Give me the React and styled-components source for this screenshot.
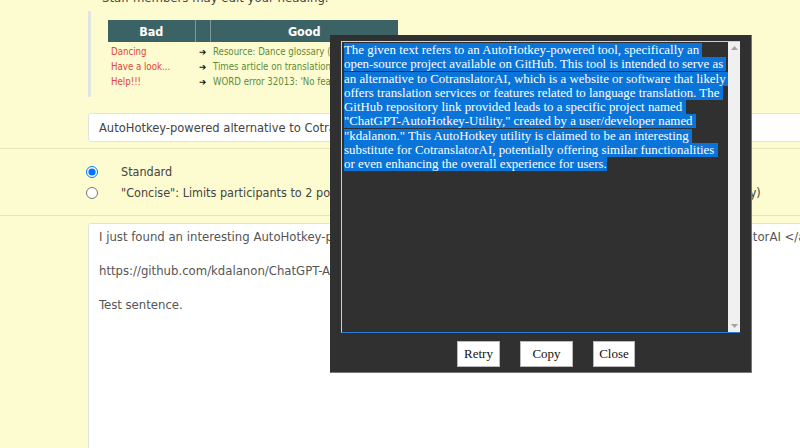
import React from 'react';
import styled, { createGlobalStyle } from 'styled-components';

const GlobalStyle = createGlobalStyle`
  html, body {
    margin: 0;
    padding: 0;
    background: #fdfbd0;
    overflow: hidden;
  }
  body {
    font-family: "DejaVu Sans Condensed", "Liberation Sans", sans-serif;
  }
`;

const Page = styled.div`
  position: relative;
  width: 800px;
  height: 448px;
  overflow: hidden;
  background: #fdfbd0;
`;

const Section = styled.div`
  padding-left: 88px;
`;

const Heading = styled.p`
  margin: -10px 0 0 14px;
  font-size: 13px;
  line-height: 16px;
  color: #444;
`;

const Quote = styled.div`
  margin-top: 5px;
  border-left: 3px solid #e1e3e4;
  padding: 9px 0 8px 17px;
`;

const Table = styled.table`
  border-collapse: collapse;
  width: 290px;
  table-layout: fixed;
  font-size: 9.6px;
  tbody tr:first-child td {
    padding-top: 2px;
  }
`;

const Th = styled.th`
  height: 22px;
  padding: 0;
  background: #3b6365;
  color: #fff;
  font-size: 12.5px;
  font-weight: bold;
  text-align: center;
  border-right: 1px solid #7c9a9b;
  &:last-child {
    border-right: none;
  }
`;

const Td = styled.td`
  height: 15px;
  padding: 0 0 0 ${p => (p.$arrow ? 0 : 3)}px;
  color: ${p => p.$tone === 'bad' ? '#e2463a' : p.$tone === 'good' ? '#5d8c3b' : '#111'};
  text-align: ${p => (p.$arrow ? 'center' : 'left')};
  white-space: nowrap;
  overflow: hidden;
`;

const TitleInput = styled.input`
  display: block;
  margin-top: 16px;
  box-sizing: border-box;
  width: 760px;
  height: 29px;
  padding: 0 10px;
  border: 1px solid #e2e2e2;
  border-radius: 3px;
  background: #fff;
  font-family: inherit;
  font-size: 12.8px;
  color: #444;
  outline: none;
`;

const Divider = styled.div`
  margin-top: ${p => p.$top}px;
  border-top: 1px solid #e9e5b6;
`;

const RadioGroup = styled.div`
  padding: 12px 0 12px 86px;
`;

const RadioRow = styled.label`
  display: flex;
  align-items: center;
  height: 21px;
  font-size: 12.5px;
  color: #444;
  white-space: nowrap;
`;

const Radio = styled.input`
  margin: 0 23px 0 0;
  width: 12px;
  height: 12px;
`;

const Body = styled.textarea`
  display: block;
  margin-top: 7px;
  box-sizing: border-box;
  width: 760px;
  height: 240px;
  padding: 4px 10px;
  border: 1px solid #e2e2e2;
  border-radius: 3px;
  background: #fff;
  font-family: inherit;
  font-size: 13px;
  line-height: 17px;
  color: #555;
  resize: none;
  overflow: hidden;
  outline: none;
`;

const Dialog = styled.div`
  position: absolute;
  left: 330px;
  top: 35px;
  width: 422px;
  height: 338px;
  box-sizing: border-box;
  padding: 6px 11px 0 11px;
  background: #303030;
  border-right: 1px solid #777;
  border-bottom: 1px solid #777;
  display: flex;
  flex-direction: column;
`;

const ResultBox = styled.div`
  display: flex;
  width: 399px;
  height: 292px;
  box-sizing: border-box;
  border-top: 1px solid #cfcfcf;
  border-left: 1px solid #cfcfcf;
  border-bottom: 1px solid #2d7ad6;
`;

const ResultText = styled.div`
  flex: 1;
  padding: 1px 2px;
  font-family: "Liberation Serif", serif;
  font-size: 12.9px;
  line-height: 14.3px;
  white-space: pre;
  overflow: hidden;
  color: #fff;
`;

const Selected = styled.span`
  background: #0a74d8;
  color: #fff;
`;

const Scrollbar = styled.div`
  width: 12px;
  flex-shrink: 0;
  background: #f0f0f0;
  display: flex;
  flex-direction: column;
  justify-content: space-between;
  align-items: center;
  padding: 4px 0;
`;

const Buttons = styled.div`
  display: flex;
  justify-content: center;
  gap: 20px;
  margin-top: 8px;
  padding-left: 11px;
`;

const Button = styled.button`
  width: ${p => p.$w}px;
  height: 26px;
  padding: 0;
  background: #fff;
  border: 1px solid #b9b9b9;
  font-family: "Liberation Serif", serif;
  font-size: 13px;
  color: #111;
`;

const rows = [
  ['Dancing', 'Resource: Dance glossary (i.e. terms used in dance)'],
  ['Have a look...', 'Times article on translation software'],
  ['Help!!!', "WORD error 32013: 'No feature available'"],
];

const lines = [
  'The given text refers to an AutoHotkey-powered tool, specifically an ',
  'open-source project available on GitHub. This tool is intended to serve as ',
  'an alternative to CotranslatorAI, which is a website or software that likely ',
  'offers translation services or features related to language translation. The ',
  'GitHub repository link provided leads to a specific project named ',
  '"ChatGPT-AutoHotkey-Utility," created by a user/developer named ',
  '"kdalanon." This AutoHotkey utility is claimed to be an interesting ',
  'substitute for CotranslatorAI, potentially offering similar functionalities ',
  'or even enhancing the overall experience for users.',
];

const bodyText =
  'I just found an interesting AutoHotkey-powered alternative to <a href="https://www.cotranslator.ai/">CotranslatorAI </a>\n\n' +
  'https://github.com/kdalanon/ChatGPT-AutoHotkey-Utility\n\n' +
  'Test sentence.';

const Arrow = ({ down }) => (
  <svg width="7" height="4" viewBox="0 0 7 4">
    <path d={down ? 'M0 0h7L3.5 4z' : 'M0 4h7L3.5 0z'} fill="#a3a3a3" />
  </svg>
);

export default function App() {
  return (
    <Page>
      <GlobalStyle />
      <Section>
        <Heading>Staff members may edit your heading.</Heading>
        <Quote>
          <Table>
            <colgroup>
              <col style={{ width: 87 }} />
              <col style={{ width: 15 }} />
              <col />
            </colgroup>
            <thead>
              <tr>
                <Th>Bad</Th>
                <Th />
                <Th>Good</Th>
              </tr>
            </thead>
            <tbody>
              {rows.map(([bad, good]) => (
                <tr key={bad}>
                  <Td $tone="bad">{bad}</Td>
                  <Td $arrow>➔</Td>
                  <Td $tone="good">{good}</Td>
                </tr>
              ))}
            </tbody>
          </Table>
        </Quote>
        <TitleInput readOnly value="AutoHotkey-powered alternative to CotranslatorAI" />
      </Section>
      <Divider $top={6} />
      <RadioGroup>
        <RadioRow>
          <Radio type="radio" name="mode" defaultChecked />
          Standard
        </RadioRow>
        <RadioRow>
          <Radio type="radio" name="mode" />
          "Concise": Limits participants to 2 posts each for a quick and focused discussion (recommended for threads only)
        </RadioRow>
      </RadioGroup>
      <Divider $top={0} />
      <Section>
        <Body readOnly wrap="off" defaultValue={bodyText} />
      </Section>

      <Dialog>
        <ResultBox>
          <ResultText>
            {lines.map((l, i) => (
              <React.Fragment key={i}>
                <Selected>{l}</Selected>
                {'\n'}
              </React.Fragment>
            ))}
          </ResultText>
          <Scrollbar>
            <Arrow />
            <Arrow down />
          </Scrollbar>
        </ResultBox>
        <Buttons>
          <Button $w={43}>Retry</Button>
          <Button $w={53}>Copy</Button>
          <Button $w={42}>Close</Button>
        </Buttons>
      </Dialog>
    </Page>
  );
}
